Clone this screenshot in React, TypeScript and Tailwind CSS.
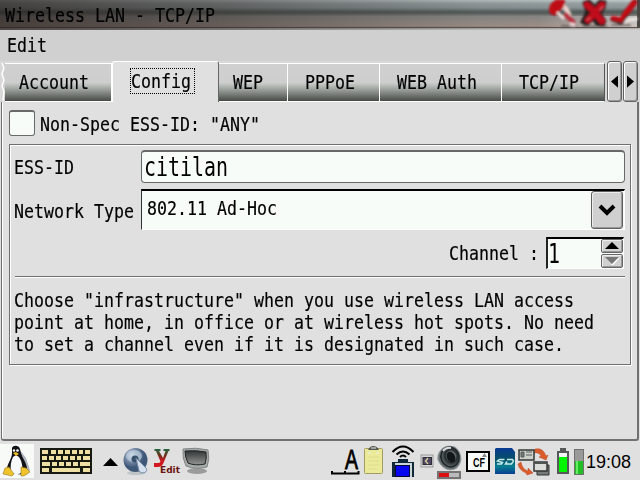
import React from "react";

type TextProps = { children: React.ReactNode; className?: string };

// Condensed terminal-like lettering: 10px per character.
function Txt({ children, className = "" }: TextProps) {
  return (
    <span className={"block origin-left scale-x-[0.8305] whitespace-pre font-['DejaVu_Sans_Mono',monospace] text-[20px] leading-[22px] text-black [-webkit-text-stroke:0.2px_#000] " + className}>
      {children}
    </span>
  );
}

function BigTxt({ children, className = "" }: TextProps) {
  return (
    <span className={"block origin-left scale-x-[0.767] whitespace-pre font-['DejaVu_Sans_Mono',monospace] text-[26px] leading-[30px] text-black " + className}>
      {children}
    </span>
  );
}

function TitleIcons() {
  return (
    <svg width="100" height="30" viewBox="540 0 100 30" className="block shrink-0">
      <defs>
        <filter id="soft" x="-10%" y="-10%" width="120%" height="120%">
          <feGaussianBlur stdDeviation="0.8" />
        </filter>
        <linearGradient id="shine" x1="0" y1="0" x2="1" y2="0">
          <stop offset="0" stopColor="#fff" stopOpacity="0" />
          <stop offset="1" stopColor="#fff" stopOpacity=".45" />
        </linearGradient>
      </defs>
      <rect x="540" y="16" width="98" height="11" fill="url(#shine)" />
      <rect x="637" y="0" width="3" height="27" fill="#4a4644" />
      <g filter="url(#soft)" fill="none" strokeLinecap="round" strokeLinejoin="round">
        <path d="M562 26h14M583 26h24M612 25h18" stroke="#5a5350" strokeWidth="2" opacity=".7" />
        <path d="M560 5q9 3 9 13" stroke="#ead2cc" strokeWidth="5" />
        <path d="M549 10q0-9 10-10h6q0 6-4 9-3 8-8 6-4-1-4-5z" fill="#bf0a16" />
        <path d="M556 1h7l-1 6" stroke="#c00c18" strokeWidth="3" />
        <path d="M558 13l5 5" stroke="#f3dfdc" strokeWidth="3" />
        <path d="M566 15l7 7" stroke="#b83340" strokeWidth="5" />
        <path d="M571 24l3 1" stroke="#f1dada" strokeWidth="3" />
        <path d="M584 3l5-2 6 6 5-6 5 1-1 6-4 5 5 8-2 4-6-1-4-5-6 5-5-2 5-10z" fill="#1c1616" stroke="#241c1c" strokeWidth="3" />
        <path d="M587 5l8 7 7-7M588 20l7-7 7 8" stroke="#c00a1c" strokeWidth="6.500" />
        <path d="M587 20l3-2M603 7l-3 3" stroke="#d85864" strokeWidth="1.500" />
        <path d="M622 23l6-3 8-1" stroke="#eee6e2" strokeWidth="3" />
        <path d="M613 19l8 3 5-8 9-12" stroke="#4a2828" strokeWidth="5.500" />
        <path d="M613 18l8 2 5-8 8-10" stroke="#c00a18" strokeWidth="4.500" />
        <path d="M627 12l7-9" stroke="#c00a18" strokeWidth="6" />
      </g>
    </svg>
  );
}

function Tab({ label, box, last = false }: { label: string; box: string; last?: boolean }) {
  return (
    <div className={"mt-[2px] h-[39px] shrink-0 border-y border-r border-t-white border-b-white bg-[linear-gradient(#d0d0d0_0%,#cecece_50%,#b4b9b5_60%,#7e827e_80%,#474a47_100%)] " + (last ? "border-r-[#555] " : "border-r-white ") + box}>
      <Txt className="mt-[7px]">{label}</Txt>
    </div>
  );
}

function ScrollButton({ left = false }: { left?: boolean }) {
  return (
    <div className="flex h-[41px] w-[15px] shrink-0 items-center justify-center rounded-[3px] border border-[#626262] bg-[#d0d0d0] shadow-[inset_1px_1px_#fff,inset_-1px_-1px_#9a9a9a]">
      <svg width="7" height="13" viewBox="0 0 8 14">
        <path d={left ? "M8 0v14L0 7z" : "M0 0v14l8-7z"} fill="#000" />
      </svg>
    </div>
  );
}

function SpinButton({ down = false }: { down?: boolean }) {
  return (
    <div className="flex h-[14px] w-[22px] items-center justify-center rounded-[2px] border border-[#666] bg-[#d0d0d0] shadow-[inset_1px_1px_#eee,inset_-1px_-1px_#999]">
      <svg width="16" height="8" viewBox="0 0 16 8">
        {down ? (
          <>
            <path d="M15 0L8 8" stroke="#fff" strokeWidth="2" />
            <path d="M1 0h14L8 7z" fill="#777" />
          </>
        ) : (
          <path d="M1 7h14L8 0z" fill="#000" />
        )}
      </svg>
    </div>
  );
}

function TrayLeft() {
  // Each key is [x, width].
  const rows = [
    [[42, 6], [51, 5], [58, 5], [65, 5], [72, 5], [79, 4], [85, 5]],
    [[42, 5], [49, 5], [56, 5], [63, 5], [70, 5], [77, 4], [83, 7]],
    [[42, 8], [52, 5], [59, 5], [66, 5], [73, 5], [80, 10]],
    [[42, 7], [52, 28], [83, 7]],
  ];
  return (
    <svg width="220" height="36" viewBox="0 444 220 36" className="block shrink-0">
      <defs>
        <radialGradient id="orb" cx="35%" cy="30%">
          <stop offset="0" stopColor="#eef5ff" />
          <stop offset=".45" stopColor="#8498b2" />
          <stop offset="1" stopColor="#405878" />
        </radialGradient>
        <linearGradient id="why" gradientUnits="userSpaceOnUse" x1="0" y1="448" x2="0" y2="467">
          <stop offset="0" stopColor="#16704a" />
          <stop offset=".4" stopColor="#703018" />
          <stop offset=".65" stopColor="#c81820" />
          <stop offset="1" stopColor="#d81820" />
        </linearGradient>
        <linearGradient id="screen" x1="0" y1="0" x2="0" y2="1">
          <stop offset="0" stopColor="#303434" />
          <stop offset="1" stopColor="#929594" />
        </linearGradient>
      </defs>
      <rect x="0" y="444" width="34" height="34" fill="#f8faf8" />
      <path d="M20 450l6 8 4 12-4 5h-8z" fill="#b0b4bf" />
      <path d="M12 448c1-3 7-3 8 1 1 8 6 12 7 19l-3 6H10l-3-4c0-7 5-11 5-17z" fill="#111318" />
      <path d="M13 457c2-2 4-2 6 0 3 4 4 11 3 15-3 3-8 3-11 0-1-6 0-11 2-15z" fill="#f7f9fb" />
      <circle cx="14" cy="450.500" r="1.200" fill="#fff" />
      <circle cx="17.500" cy="450.500" r="1.300" fill="#fff" />
      <path d="M13 453l3-1 3 2-3 2z" fill="#e9b820" />
      <path d="M5 468l4-1 5 7-2 2-9-2zM21 467l5 1 4 4-6 4h-3z" fill="#efc32c" stroke="#8a6710" strokeWidth=".5" />
      <rect x="40" y="448" width="52" height="26" fill="#171a12" />
      {rows.map((row, r) =>
        row.map(([x, w]) => <rect key={r + "-" + x} x={x} y={450 + r * 6} width={w} height="4" fill="#eee0a2" />)
      )}
      <path d="M103 466l7.500-8 7.500 8z" fill="#000" />
      <ellipse cx="136" cy="473" rx="9" ry="2" fill="#bfc4c7" />
      <circle cx="135.500" cy="460" r="12" fill="url(#orb)" />
      <ellipse cx="134" cy="456" rx="8" ry="6" fill="#bdcddd" opacity=".7" />
      <circle cx="135" cy="459" r="3.500" fill="#38526d" />
      <path d="M136 458l10 10c3 4-4 7-7 3z" fill="#d4e0ed" stroke="#7588a2" />
      <path d="M154.500 449h6v2h-1.500l4 7 2.500-7h-2v-2h6v2h-1l-5.500 13q-1.500 3-5 3h-4v-4h4q2 0 2.500-1.500l-4.500-10.500h-1.500z" fill="url(#why)" />
      <text x="160" y="473" fontFamily="DejaVu Sans" fontWeight="700" fontSize="8.500" textLength="20" lengthAdjust="spacingAndGlyphs" fill="#6b1512">Edit</text>
      <ellipse cx="197" cy="471" rx="10" ry="3" fill="#999c9b" />
      <path d="M183 449q13-2 25 1 2 9-1 17-11 3-21-1-4-8-3-17z" fill="#a6aaa8" stroke="#818584" />
      <path d="M185 451q11-1 21 1 1 6-1 12-10 2-17-1-3-6-3-12z" fill="url(#screen)" stroke="#202424" />
    </svg>
  );
}

function TrayRight() {
  return (
    <svg width="255" height="36" viewBox="330 444 255 36" className="block shrink-0">
      <defs>
        <linearGradient id="sd" x1="0" y1="0" x2="0" y2="1">
          <stop offset="0" stopColor="#083b94" />
          <stop offset=".45" stopColor="#045064" />
          <stop offset=".7" stopColor="#087f91" />
          <stop offset="1" stopColor="#063d92" />
        </linearGradient>
        <radialGradient id="speaker" cx="58%" cy="48%">
          <stop offset="0" stopColor="#202426" />
          <stop offset=".4" stopColor="#777e80" />
          <stop offset=".65" stopColor="#252a2b" />
          <stop offset="1" stopColor="#555d60" />
        </radialGradient>
      </defs>
      <path d="M332 471v2.500h26.500v-2.500M345 471v3" fill="none" stroke="#000" strokeWidth="2" />
      <text x="345" y="469" fontFamily="Liberation Sans" fontSize="28" textLength="13" lengthAdjust="spacingAndGlyphs" fill="#000" stroke="#000" strokeWidth=".9">A</text>
      <rect x="364.500" y="448.500" width="18" height="25" rx="1" fill="#eaea98" stroke="#a29c62" />
      <path d="M368 450q2-4 5-4 4 0 6 4z" fill="#555850" />
      <path d="M371 448h5M368 453h3m5 0h3" stroke="#eee" />
      <path d="M368 457h11m-11 4h11m-11 4h11m-11 4h9" stroke="#d2d789" strokeWidth=".6" />
      <path d="M392.500 452q10.500-11 21 0M396.500 454.500q6.500-6 13 0M400 457q3-3 6 0" fill="none" stroke="#000" strokeWidth="2" />
      <path d="M398 459h10v3h6v15h-3v-13h-16v13h-3v-15h6z" fill="#102838" />
      <path d="M395 463h17v14h-17z" fill="#c8d8d8" />
      <rect x="395.500" y="465.500" width="14" height="11" fill="#0808f0" stroke="#080838" />
      <rect x="421" y="455" width="12" height="12" fill="#d8d8d8" stroke="#989898" />
      <rect x="423" y="457.500" width="8.500" height="7" fill="#504864" stroke="#302c35" />
      <path d="M428 458l-2.500 3 2.500 3" stroke="#e0d8a0" strokeWidth="1.200" fill="none" />
      <path d="M440 451q5-7 15-4 6 4 6 13-2 10-11 10-8-1-12-10-1-5 2-9z" fill="#656d70" stroke="#999fa1" />
      <ellipse cx="450" cy="457" rx="9" ry="10" fill="url(#speaker)" stroke="#202627" strokeWidth="1.500" transform="rotate(-22 450 457)" />
      <ellipse cx="451" cy="457" rx="4" ry="5.500" fill="#111617" transform="rotate(-25 451 457)" />
      <path d="M443 451q3-4 8-3" fill="none" stroke="#d9dcdc" strokeWidth="2" />
      <rect x="438" y="472" width="22" height="6" fill="#bbb" stroke="#747474" strokeWidth="2" />
      <rect x="439" y="473" width="10" height="4" fill="#dd1010" />
      <rect x="467" y="452" width="22" height="19" fill="#f8fcfa" stroke="#000" strokeWidth="2" />
      <text x="473" y="467" fontFamily="Liberation Sans" fontWeight="700" fontSize="13" textLength="12" lengthAdjust="spacingAndGlyphs" fill="#000">CF</text>
      <path d="M482 457l2.500-4 2.500 4z" fill="#888" />
      <path d="M496 448h16l3 4v22h-20v-25z" fill="url(#sd)" />
      <path d="M504.500 459.500h-5l-2 1.500 5 1.500-1 1.500h-4.500M507 459.500h5.500l1 1.500-2 3h-6l1.500-2.500" fill="none" stroke="#c4eeee" strokeWidth="1.500" />
      <path d="M535 449q8-2 11 7l2-1-2 5-7-3 2-1q-2-4-7-3zM521 462q1 7 7 9v-3l5 5-6 2-1-2q-7-3-8-9z" fill="#dc5b2b" stroke="#b24a27" strokeWidth=".5" />
      <path d="M519 450h15v10h-15z" fill="#cbd0ca" stroke="#343936" strokeWidth="1.500" />
      <path d="M521 452h3v5h-3zm5 0h6m-6 3h6" stroke="#555b58" fill="#737b77" />
      <path d="M537 465h12v10h-12z" fill="#777b79" stroke="#333" />
      <path d="M534 462h13v9h-13z" fill="#dadcda" stroke="#333" strokeWidth="1.500" />
      <path d="M535 463h11" stroke="#4f5552" strokeWidth="2" />
      <path d="M560 448h6v3h3v23h-12v-23h3z" fill="#555a58" />
      <rect x="559" y="453" width="8" height="19" fill="#f4f8f4" />
      <rect x="559" y="457" width="8" height="15" fill="#00f500" />
      <rect x="574.500" y="449.500" width="9" height="25" fill="#999" stroke="#707070" />
      <rect x="575" y="461" width="8" height="13" fill="#22bf24" />
      <path d="M577 461v13" stroke="#62ed63" strokeWidth="2" />
    </svg>
  );
}

export default function App() {
  return (
    <div className="flex h-[480px] w-[640px] flex-col overflow-hidden bg-[#e0e0e0]">
      <header className="flex h-[30px] shrink-0 justify-between bg-[linear-gradient(90deg,rgba(40,34,32,.75)_0%,rgba(45,40,38,.5)_35%,rgba(80,80,80,.15)_75%,transparent),linear-gradient(#c0caca_0%,#98a2a4_12%,#8a9496_26%,#525c5a_39%,#5c625f_45%,#8c8a88_55%,#9a908a_75%,#a5948c_88%,#4b4038_91%,#c8c8c8_96%)]">
        <div className="w-[300px] pl-[5px] pt-[4px]"><Txt>Wireless LAN - TCP/IP</Txt></div>
        <TitleIcons />
      </header>
      <nav className="h-[31px] shrink-0 bg-[#d0d0d0] pl-[7px] pt-[4px]"><Txt>Edit</Txt></nav>
      <div className="flex h-[41px] shrink-0 bg-[#d8d8d8]">
        <svg width="5" height="41" viewBox="0 0 5 41" className="block shrink-0">
          <path d="M5 2H2l2 5-2 6 2 6-2 6 2 6-1 9h2z" fill="#cecece" />
          <path d="M2 2l2 5-2 6 2 6-2 6 2 6-1 9" fill="none" stroke="#fff" strokeWidth="1.500" />
        </svg>
        <Tab label="Account" box="w-[107px] pl-[14px]" />
        <div className="h-[41px] w-[107px] shrink-0 rounded-t-[3px] border-t border-l border-r border-t-white border-l-white border-r-[#666] bg-[#e0e0e0] pl-[17px] pt-[6px]">
          <div className="h-[26px] w-[65px] border border-dotted border-black"><Txt className="mt-px">Config</Txt></div>
        </div>
        <Tab label="WEP" box="w-[69px] pl-[14px]" />
        <Tab label="PPPoE" box="w-[92px] pl-[17px]" />
        <Tab label="WEB Auth" box="w-[122px] pl-[17px]" />
        <Tab label="TCP/IP" box="w-[103px] pl-[17px]" last />
        <div className="ml-[2px] flex gap-px"><ScrollButton left /><ScrollButton /></div>
      </div>
      <main className="ml-px h-[339px] w-[638px] shrink-0 rounded-b-[3px] border-b-2 border-l border-r-2 border-[#707070] bg-[#e0e0e0] pl-[7px] shadow-[inset_1px_0_#fff]">
        <div className="flex h-[42px] pt-[8px]">
          <div className="h-[26px] w-[26px] shrink-0 rounded-[3px] border border-t-2 border-[#696969] bg-[#f8fcf8]" />
          <Txt className="ml-[5px] mt-[3px]">Non-Spec ESS-ID: "ANY"</Txt>
        </div>
        <section className="h-[221px] w-[622px] border border-[#707070] pl-[4px] shadow-[inset_1px_1px_#fff,1px_1px_#fff]">
          <div className="flex h-[38px] pt-[5px]">
            <div className="w-[127px] shrink-0 pt-[6px]"><Txt>ESS-ID</Txt></div>
            <div className="h-[33px] w-[484px] shrink-0 rounded-[4px] border border-t-2 border-[#686868] bg-[#f8fcf8] pl-[2px]"><BigTxt>citilan</BigTxt></div>
          </div>
          <div className="flex h-[48px] pt-[6px]">
            <div className="w-[127px] shrink-0 pt-[11px]"><Txt>Network Type</Txt></div>
            <div className="flex h-[41px] w-[484px] shrink-0 justify-between border border-t-2 border-t-black border-l-[#333] border-r-white border-b-white bg-[#f8fcf8] pl-[5px] pr-px">
              <div className="w-[200px] pt-[6px]"><Txt>802.11 Ad-Hoc</Txt></div>
              <div className="flex h-[38px] w-[32px] items-center justify-center rounded-[3px] border border-[#606060] bg-[#d0d0d0] shadow-[inset_1px_1px_#eee,inset_-1px_-1px_#999]">
                <svg width="18" height="12" viewBox="0 0 18 12"><path d="M2 2l7 7 7-7" fill="none" stroke="#000" strokeWidth="4" /></svg>
              </div>
            </div>
          </div>
          <div className="flex h-[45px] pt-[6px]">
            <div className="ml-[435px] w-[97px] shrink-0 pt-[5px]"><Txt>Channel :</Txt></div>
            <div className="flex h-[32px] w-[78px] shrink-0 justify-between border border-t-2 border-l-2 border-t-black border-l-[#222] border-r-white border-b-white bg-[#f8fcf8]">
              <div className="w-[30px]"><BigTxt className="leading-[27px]">1</BigTxt></div>
              <div className="flex flex-col gap-px"><SpinButton /><SpinButton down /></div>
            </div>
          </div>
          <div className="ml-px h-[2px] w-[610px] border-t border-[#707070] bg-white" />
          <div className="pt-[11px]">
            <Txt>Choose "infrastructure" when you use wireless LAN access</Txt>
            <Txt>point at home, in office or at wireless hot spots. No need</Txt>
            <Txt>to set a channel even if it is designated in such case.</Txt>
          </div>
        </section>
      </main>
      <footer className="flex h-[39px] shrink-0 justify-between pt-[3px]">
        <TrayLeft />
        <div className="flex">
          <TrayRight />
          <div className="w-[55px] pl-px pt-[6px] font-['Liberation_Sans',sans-serif] text-[18px] leading-[24px] text-black">19:08</div>
        </div>
      </footer>
    </div>
  );
}
